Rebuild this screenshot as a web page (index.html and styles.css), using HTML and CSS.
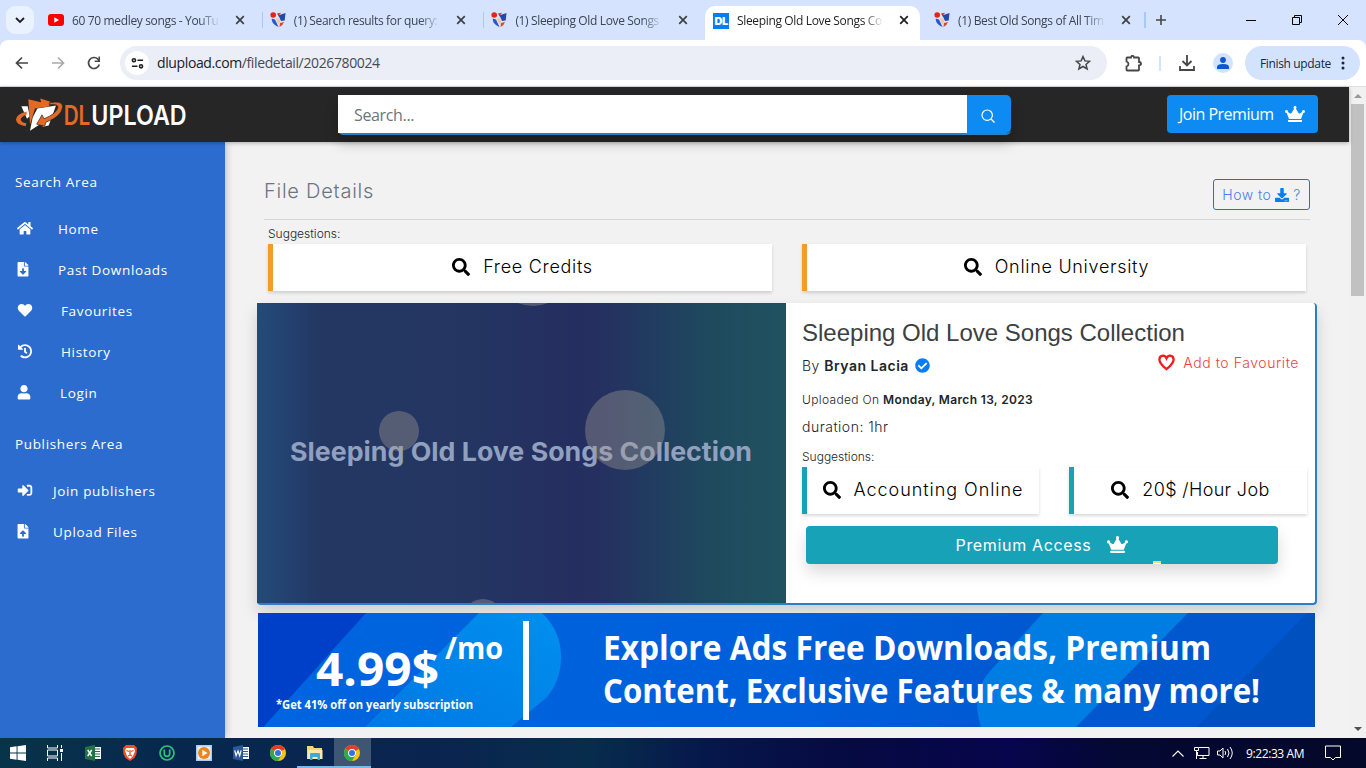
FILE: index.html
```
<!DOCTYPE html>
<html lang="en">
  <head>
    <meta charset="UTF-8" />
    <meta name="viewport" content="width=device-width, initial-scale=1.0" />
    <title>Sleeping Old Love Songs Collection</title>
    <link rel="stylesheet" href="styles.css">
  </head>
  <body>
    <!-- shared icons -->
    <svg class="sprite">
      <symbol id="close" viewBox="0 0 10 10"><path d="M1.2 1.2l7.6 7.6M8.800 1.2L1.2 8.800" fill="none" stroke="currentColor" stroke-width="1.7"/></symbol>
      <symbol id="forum" viewBox="0 0 16 16">
        <path d="M1.500 4L8 4l7.500-3-.8 8q-1 4-5.700 6.500Q3 12.500 2 9z" fill="#e4e2ea"/>
        <path d="M8 3.500L15.500 1l-.8 7.500L11 9 9.500 5.500z" fill="#2149b5"/>
        <path d="M1.700 6.500L5 7.500l3.500 7.500Q3 12.500 2 9z" fill="#2a57c8"/>
        <path d="M10 11l4-1q-1 3.500-4.500 5z" fill="#d4453b"/>
        <path d="M6 7l3-1 1.500 4.500L8 12z" fill="#ecc9a0"/>
        <circle cx="3.200" cy="3" r="2.800" fill="#e3231c"/>
        <path d="M7 1.500l4-.7-2.500 3.200z" fill="#e3231c"/>
      </symbol>
      <symbol id="search" viewBox="0 0 512 512"><path d="M505 442.7L405.3 343c-4.5-4.5-10.6-7-17-7H372c27.6-35.3 44-79.7 44-128C416 93.1 322.9 0 208 0S0 93.1 0 208s93.1 208 208 208c48.3 0 92.7-16.4 128-44v16.3c0 6.4 2.5 12.5 7 17l99.7 99.7c9.4 9.4 24.6 9.4 33.9 0l28.3-28.3c9.4-9.4 9.4-24.6.1-34zM208 336c-70.7 0-128-57.2-128-128 0-70.7 57.2-128 128-128 70.7 0 128 57.2 128 128 0 70.7-57.2 128-128 128z"/></symbol>
      <symbol id="crown" viewBox="0 0 640 512"><path d="M528 448H112c-8.800 0-16 7.200-16 16v32c0 8.800 7.200 16 16 16h416c8.800 0 16-7.200 16-16v-32c0-8.800-7.200-16-16-16zm64-320c-26.500 0-48 21.500-48 48 0 7.100 1.600 13.700 4.400 19.800L476 239.200c-15.400 9.200-35.300 4-44.200-11.600L350.300 85C361 76.200 368 63 368 48c0-26.500-21.500-48-48-48s-48 21.500-48 48c0 15 7 28.200 17.700 37l-81.500 142.600c-8.900 15.600-28.900 20.800-44.200 11.600l-72.300-43.400c2.700-6 4.400-12.700 4.400-19.800 0-26.500-21.500-48-48-48S0 149.500 0 176s21.500 48 48 48c2.600 0 5.200-.4 7.700-.8L128 416h384l72.300-192.800c2.500.4 5.100.8 7.700.8 26.500 0 48-21.500 48-48s-21.500-48-48-48z"/></symbol>
      <symbol id="chrome" viewBox="0 0 16 16">
        <circle cx="8" cy="8" r="8" fill="#fbc116"/>
        <path d="M8 8L1.070 4A8 8 0 0 1 14.930 4z" fill="#e33b2e"/>
        <path d="M8 8L1.070 4A8 8 0 0 0 8 16l3.500-6z" fill="#2da94f"/>
        <circle cx="8" cy="8" r="3.900" fill="#fff"/>
        <circle cx="8" cy="8" r="3" fill="#2f74e0"/>
      </symbol>
    </svg>

    <div class="tabs">
      <div class="tab-list">
        <svg viewBox="0 0 12 12"><path d="M2 4l4 4 4-4" fill="none" stroke="#1f1f1f" stroke-width="1.800"/></svg>
      </div>
      <div class="tab">
        <svg class="fav" viewBox="0 0 16 16"><rect y="2" width="16" height="12" rx="3" fill="#f00"/><path d="M6.300 5.300v5.400L11 8z" fill="#fff"/></svg>
        <span class="tab-title">60 70 medley songs - YouTu</span>
        <svg class="x"><use href="#close"/></svg>
      </div>
      <div class="tab line">
        <svg class="fav"><use href="#forum"/></svg>
        <span class="tab-title">(1) Search results for query: o</span>
        <svg class="x"><use href="#close"/></svg>
      </div>
      <div class="tab line">
        <svg class="fav"><use href="#forum"/></svg>
        <span class="tab-title">(1) Sleeping Old Love Songs</span>
        <svg class="x"><use href="#close"/></svg>
      </div>
      <div class="tab active">
        <span class="fav dl">DL</span>
        <span class="tab-title">Sleeping Old Love Songs Co</span>
        <svg class="x"><use href="#close"/></svg>
      </div>
      <div class="tab">
        <svg class="fav"><use href="#forum"/></svg>
        <span class="tab-title">(1) Best Old Songs of All Tim</span>
        <svg class="x"><use href="#close"/></svg>
      </div>
      <div class="new-tab"><svg viewBox="0 0 10 10"><path d="M5 0v10M0 5h10" stroke="#444746" stroke-width="1.600"/></svg></div>
      <div class="window">
        <svg viewBox="0 0 10 10"><path d="M0 5.500h10" stroke="#000"/></svg>
        <svg viewBox="0 0 10 10"><path d="M.5 2.500h7v7h-7zM2.500 2.500v-2h7v7h-2" fill="none" stroke="#000"/></svg>
        <svg viewBox="0 0 10 10"><path d="M0 0l10 10M10 0L0 10" stroke="#000"/></svg>
      </div>
    </div>

    <div class="toolbar">
      <svg class="nav" viewBox="0 0 14 14"><path d="M13 7H2M7 1.500L1.500 7 7 12.500" fill="none" stroke="#444746" stroke-width="1.700"/></svg>
      <svg class="nav" viewBox="0 0 14 14"><path d="M1 7h11M7 1.500L12.500 7 7 12.500" fill="none" stroke="#a9abad" stroke-width="1.700"/></svg>
      <svg class="nav" viewBox="0 0 14 14"><path d="M12.300 8.500A5.500 5.500 0 1 1 11 3.200L12.500 5" fill="none" stroke="#444746" stroke-width="1.700"/><path d="M13 .5V6H7.700V4.500h3.800v-4z" fill="#444746"/></svg>
      <div class="address">
        <span class="site"><svg viewBox="0 0 14 14"><g fill="none" stroke="#202124" stroke-width="1.700"><circle cx="3.200" cy="3.500" r="1.700"/><path d="M7 3.500h6M1 10h6"/><circle cx="10.800" cy="10" r="1.700"/></g></svg></span>
        <span class="url">dlupload.com<i>/filedetail/2026780024</i></span>
        <svg class="star" viewBox="0 0 16 16"><path d="M8 1.600l1.900 4.300 4.700.4-3.600 3.100 1.100 4.600L8 11.500 3.900 14 5 9.400 1.400 6.300l4.700-.4z" fill="none" stroke="#444746" stroke-width="1.500"/></svg>
      </div>
      <svg class="ext" viewBox="0 0 17 17"><path d="M1.500 3.300q0-.8.8-.8H6q.2-1.700 1.500-1.700T9 2.500h4.200q.8 0 .8.800V7q2 .2 2 1.700t-2 1.700v4.300q0 .8-.8.800H2.300q-.8 0-.8-.8v-3.200q2-.7 2-2.500t-2-2.500z" fill="none" stroke="#444746" stroke-width="1.800"/></svg>
      <span class="bar"></span>
      <svg class="down" viewBox="0 0 16 16"><path d="M8 0v10M3.500 6L8 10.500 12.500 6M1 11v4h14v-4" fill="none" stroke="#444746" stroke-width="1.800"/></svg>
      <span class="profile"><svg viewBox="0 0 12 12"><circle cx="6" cy="3" r="2.900" fill="#0b57d0"/><path d="M0 12v-2q0-3 6-3t6 3v2z" fill="#0b57d0"/></svg></span>
      <div class="update">Finish update
        <svg viewBox="0 0 4 14"><circle cx="2" cy="2" r="1.500"/><circle cx="2" cy="7" r="1.500"/><circle cx="2" cy="12" r="1.500"/></svg>
      </div>
    </div>

    <div class="page">
      <div class="site-body">
        <header>
          <svg class="logo" viewBox="42 36 531 110">
            <path d="M64 66h19l6 30-8 8z" fill="#fff"/>
            <path d="M112 73l56-9-10 28-12 32-18 4 8-18-46 30 8-40z" fill="#fff"/>
            <path d="M80 82q-32 8-32 25 2 16 29 19l2-9q-16-2-17-11 2-9 18-15z" fill="#e36a26"/>
            <path d="M85 45l38 9-2-11 30 10-4 14-42 6-15 48z" fill="#e36a26"/>
            <path d="M148 56q40-8 40 12-4 30-50 46l-4 12-24-6 16-28 6 12q38-16 42-34 0-12-26-8z" fill="#e36a26" stroke="#262626" stroke-width="2"/>
            <text class="logo-dl" x="191" y="122" textLength="80" lengthAdjust="spacingAndGlyphs">DL</text>
            <text class="logo-up" x="274" y="122" textLength="286" lengthAdjust="spacingAndGlyphs">UPLOAD</text>
          </svg>
          <div class="searchbar">
            <input type="text" placeholder="Search..." />
            <button><svg viewBox="0 0 14 14"><circle cx="6.200" cy="6.200" r="5.200" fill="none" stroke="#fff" stroke-width="1.200"/><path d="M10 10l3.500 3.500" stroke="#fff" stroke-width="1.200"/></svg></button>
          </div>
          <a class="join">Join Premium <svg><use href="#crown"/></svg></a>
        </header>
        <div class="columns">
          <aside>
            <h2>Search Area</h2>
            <a><svg viewBox="0 0 576 512"><path d="M280.370 148.260L96 300.110V464a16 16 0 0 0 16 16l112.060-.29a16 16 0 0 0 15.920-16V368a16 16 0 0 1 16-16h64a16 16 0 0 1 16 16v95.640a16 16 0 0 0 16 16.050L464 480a16 16 0 0 0 16-16V300L295.670 148.260a12.190 12.190 0 0 0-15.300 0zM571.600 251.470L488 182.560V44.050a12 12 0 0 0-12-12h-56a12 12 0 0 0-12 12v72.610L318.470 43a48 48 0 0 0-61 0L4.340 251.470a12 12 0 0 0-1.600 16.900l25.500 31A12 12 0 0 0 45.150 301l235.220-193.740a12.190 12.190 0 0 1 15.300 0L530.900 301a12 12 0 0 0 16.900-1.600l25.500-31a12 12 0 0 0-1.700-16.930z"/></svg><span>Home</span></a>
            <a class="file"><svg viewBox="0 0 384 512"><path d="M224 136V0H24C10.700 0 0 10.700 0 24v464c0 13.300 10.700 24 24 24h336c13.300 0 24-10.700 24-24V160H248c-13.200 0-24-10.800-24-24zm76.450 211.360l-96.420 95.700c-6.650 6.610-17.390 6.610-24.040 0l-96.420-95.700C73.420 337.290 80.540 320 94.820 320H160v-80c0-8.840 7.160-16 16-16h32c8.840 0 16 7.160 16 16v80h65.180c14.280 0 21.400 17.290 11.270 27.360zM377 105L279.100 7c-4.500-4.500-10.600-7-17-7H256v128h128v-6.100c0-6.300-2.500-12.400-7-16.900z"/></svg><span>Past Downloads</span></a>
            <a class="in3"><svg viewBox="0 0 512 512"><path d="M462.300 62.600C407.500 15.900 326 24.300 275.700 76.200L256 96.500l-19.700-20.300C186.100 24.300 104.500 15.900 49.700 62.600c-62.800 53.600-66.100 149.800-9.900 207.900l193.500 199.800c12.500 12.900 32.800 12.900 45.300 0l193.500-199.800c56.300-58.100 53-154.300-9.800-207.900z"/></svg><span>Favourites</span></a>
            <a class="in3"><svg viewBox="0 0 512 512"><path d="M504 255.531c.253 136.640-111.180 248.372-247.820 248.468-59.015.042-113.223-20.530-155.822-54.911-11.077-8.940-11.905-25.541-1.839-35.607l11.267-11.267c8.609-8.609 22.353-9.551 31.891-1.984C173.062 425.135 212.781 440 256 440c101.705 0 184-82.311 184-184 0-101.705-82.311-184-184-184-48.814 0-93.149 18.969-126.068 49.932l50.754 50.754c10.080 10.080 2.941 27.314-11.313 27.314H24c-8.837 0-16-7.163-16-16V38.627c0-14.254 17.234-21.393 27.314-11.314l49.372 49.372C129.209 34.136 189.552 8 256 8c136.810 0 247.747 110.780 248 247.531zm-180.912 78.784l9.823-12.630c8.138-10.463 6.253-25.542-4.210-33.679L288 256.349V152c0-13.255-10.745-24-24-24h-16c-13.255 0-24 10.745-24 24v135.651l65.409 50.874c10.463 8.137 25.541 6.253 33.679-4.210z"/></svg><span>History</span></a>
            <a class="user"><svg viewBox="0 0 448 512"><path d="M224 256c70.700 0 128-57.300 128-128S294.700 0 224 0 96 57.300 96 128s57.300 128 128 128zm89.600 32h-16.700c-22.200 10.200-46.900 16-72.900 16s-50.600-5.800-72.900-16h-16.700C60.200 288 0 348.200 0 422.400V464c0 26.500 21.500 48 48 48h352c26.500 0 48-21.500 48-48v-41.600c0-74.200-60.200-134.400-134.400-134.400z"/></svg><span>Login</span></a>
            <h2>Publishers Area</h2>
            <a class="out5"><svg viewBox="0 0 512 512"><path d="M416 448h-84c-6.600 0-12-5.400-12-12v-40c0-6.600 5.400-12 12-12h84c17.700 0 32-14.300 32-32V160c0-17.700-14.300-32-32-32h-84c-6.600 0-12-5.400-12-12V76c0-6.600 5.400-12 12-12h84c53 0 96 43 96 96v192c0 53-43 96-96 96zm-47-201L201 79c-15-15-41-4.500-41 17v96H24c-13.300 0-24 10.700-24 24v96c0 13.300 10.700 24 24 24h136v96c0 21.500 26 32 41 17l168-168c9.300-9.400 9.300-24.600 0-34z"/></svg><span>Join publishers</span></a>
            <a class="file out5"><svg viewBox="0 0 384 512"><path d="M224 136V0H24C10.700 0 0 10.700 0 24v464c0 13.300 10.700 24 24 24h336c13.300 0 24-10.700 24-24V160H248c-13.200 0-24-10.800-24-24zm65.180 216.010H224v80c0 8.840-7.160 16-16 16h-32c-8.840 0-16-7.160-16-16v-80H94.820c-14.280 0-21.410-17.290-11.270-27.360l96.420-95.700c6.650-6.610 17.390-6.610 24.040 0l96.420 95.700c10.150 10.070 3.030 27.360-11.250 27.360zM377 105L279.100 7c-4.500-4.500-10.600-7-17-7H256v128h128v-6.100c0-6.300-2.500-12.400-7-16.900z"/></svg><span>Upload Files</span></a>
          </aside>
          <main>
            <div class="heading">
              <h1>File Details</h1>
              <a class="howto">How to <svg viewBox="0 0 512 512"><path d="M216 0h80c13.300 0 24 10.700 24 24v168h87.700c17.800 0 26.700 21.500 14.100 34.100L269.700 378.300c-7.500 7.500-19.800 7.500-27.300 0L90.100 226.100c-12.600-12.600-3.700-34.100 14.100-34.100H192V24c0-13.300 10.700-24 24-24zm296 376v112c0 13.300-10.700 24-24 24H24c-13.300 0-24-10.700-24-24V376c0-13.300 10.700-24 24-24h146.700l49 49c20.100 20.100 52.500 20.100 72.600 0l49-49H488c13.300 0 24 10.700 24 24zm-124 88c0-11-9-20-20-20s-20 9-20 20 9 20 20 20 20-9 20-20zm64 0c0-11-9-20-20-20s-20 9-20 20 9 20 20 20 20-9 20-20z"/></svg> ?</a>
            </div>
            <div class="suggest top">
              <p>Suggestions:</p>
              <div class="boxes">
                <a><svg><use href="#search"/></svg><span>Free Credits</span></a>
                <a><svg><use href="#search"/></svg><span>Online University</span></a>
              </div>
            </div>
            <div class="card">
              <svg class="thumb" viewBox="0 0 529 300">
                <defs>
                  <linearGradient id="bg">
                    <stop offset="0" stop-color="#234b78"/>
                    <stop offset=".03" stop-color="#234675"/>
                    <stop offset=".12" stop-color="#243762"/>
                    <stop offset=".42" stop-color="#243562"/>
                    <stop offset=".6" stop-color="#252e60"/>
                    <stop offset=".65" stop-color="#253060"/>
                    <stop offset=".73" stop-color="#213a60"/>
                    <stop offset=".85" stop-color="#1f495e"/>
                    <stop offset="1" stop-color="#20525f"/>
                  </linearGradient>
                </defs>
                <rect width="529" height="300" fill="url(#bg)"/>
                <text x="33" y="158" textLength="462" lengthAdjust="spacingAndGlyphs">Sleeping Old Love Songs Collection</text>
                <g fill="#a59f97" fill-opacity=".38">
                  <circle cx="142" cy="128" r="20"/>
                  <circle cx="368" cy="127" r="40"/>
                  <circle cx="276" cy="-37" r="40"/>
                  <circle cx="226" cy="316" r="20"/>
                </g>
              </svg>
              <div class="info">
                <h3>Sleeping Old Love Songs Collection</h3>
                <div class="author">
                  <span class="by">By <b>Bryan Lacia</b></span>
                  <svg class="check" viewBox="0 0 512 512"><path d="M504 256c0 136.967-111.033 248-248 248S8 392.967 8 256 119.033 8 256 8s248 111.033 248 248zM227.314 387.314l184-184c6.248-6.248 6.248-16.379 0-22.627l-22.627-22.627c-6.248-6.249-16.379-6.249-22.628 0L216 308.118l-70.059-70.059c-6.248-6.248-16.379-6.248-22.628 0l-22.627 22.627c-6.248 6.248-6.248 16.379 0 22.627l104 104c6.249 6.249 16.379 6.249 22.628.001z"/></svg>
                  <a class="fave"><svg viewBox="0 0 16 16"><path d="M8 14.300Q1.300 9 1.300 5.200 1.500 1.800 4.600 1.600 6.900 1.700 8 4 9.100 1.700 11.400 1.600q3.100.2 3.300 3.600Q14.700 9 8 14.300z" fill="none" stroke="#f21d1d" stroke-width="2.200"/></svg><span>Add to Favourite</span></a>
                </div>
                <p class="date">Uploaded On <b>Monday, March 13, 2023</b></p>
                <p class="duration">duration: 1hr</p>
                <div class="suggest teal">
                  <p>Suggestions:</p>
                  <div class="boxes">
                    <a class="acc"><svg><use href="#search"/></svg><span>Accounting Online</span></a>
                    <a class="job"><svg><use href="#search"/></svg><span>20$ /Hour Job</span></a>
                  </div>
                </div>
                <a class="premium"><span>Premium Access</span><svg><use href="#crown"/></svg><i class="mark"></i></a>
              </div>
            </div>
            <svg class="banner" viewBox="0 0 1057 114">
              <defs>
                <linearGradient id="b0"><stop offset="0" stop-color="#0065e0"/><stop offset=".5" stop-color="#005fdb"/><stop offset="1" stop-color="#0051c4"/></linearGradient>
                <linearGradient id="b1" x1="0" y1="1" x2="1" y2="0"><stop offset="0" stop-color="#0078e4"/><stop offset="1" stop-color="#0090ee"/></linearGradient>
              </defs>
              <rect width="1057" height="114" fill="url(#b0)"/>
              <path d="M0 0h108L0 120z" fill="#0040c8"/>
              <path d="M221 0h63q19 18 19 44 0 24-15 41l-35 29H107z" fill="url(#b1)"/>
              <path d="M930 0h127v114H818z" fill="#0057ce"/>
              <path d="M930 0H785l-53 58q-20 22-9 56h95z" fill="#007de2"/>
              <path d="M1049 0h8v114H939z" fill="#0050c0"/>
              <path d="M265 8h6v99h-6z" fill="#fff"/>
              <g class="banner-text">
                <text x="58" y="73" font-size="46" textLength="123" lengthAdjust="spacingAndGlyphs">4.99$</text>
                <text x="187" y="46" font-size="31" textLength="58" lengthAdjust="spacingAndGlyphs">/mo</text>
                <text x="18" y="96" font-size="12" textLength="197" lengthAdjust="spacingAndGlyphs">*Get 41% off on yearly subscription</text>
                <text x="345" y="47" font-size="34" textLength="608" lengthAdjust="spacingAndGlyphs">Explore Ads Free Downloads, Premium</text>
                <text x="345" y="90" font-size="34" textLength="657" lengthAdjust="spacingAndGlyphs">Content, Exclusive Features &amp; many more!</text>
              </g>
            </svg>
          </main>
        </div>
      </div>
      <div class="scrollbar"><i class="up"></i><span></span><i class="dn"></i></div>
    </div>

    <div class="taskbar">
      <span><svg viewBox="0 0 16 16"><path d="M0 2.300l6.600-1v6.300H0zM7.500 1.200L16 0v7.600H7.500zM0 8.500h6.600v6.300L0 13.800zM7.500 8.500H16V16l-8.500-1.200z" fill="#fff"/></svg></span>
      <span><svg viewBox="0 0 16 16"><path d="M.5 0v3h10V0M.5 5h10v6H.5zM.5 16v-3h10v3M14.500 0v3M14.500 8v8" fill="none" stroke="#fff"/><path d="M13 4h3v3h-3z" fill="#fff"/></svg></span>
      <span><svg viewBox="0 0 16 16"><path d="M8 2h8v12H8z" fill="#fff"/><path d="M10 4h5M10 6.500h5M10 9h5M10 11.500h5" stroke="#217346" stroke-width="1.200"/><path d="M0 2l10-2v16L0 14z" fill="#217346"/><path d="M2.700 5l4 6M6.700 5l-4 6" stroke="#fff" stroke-width="1.400"/></svg></span>
      <span><svg viewBox="0 0 16 16"><path d="M4 0h8l3 3-.5 6-2 4L8 16l-4.500-3-2-4L1 3z" fill="#f04e23"/><path d="M4 3h8l1 3-2 5-3 3-3-3-2-5z" fill="#fff"/><path d="M4.500 5.500l2.500 1M11.500 5.500l-2.500 1M8 5v5M6 11l2-1 2 1" fill="none" stroke="#f04e23" stroke-width="1.300"/></svg></span>
      <span><svg viewBox="0 0 16 16"><circle cx="8" cy="8" r="7" fill="none" stroke="#2fc17c" stroke-width="1.700"/><path d="M5.300 4.500v4.200q0 2.600 2.700 2.600t2.700-2.600V4.500" fill="none" stroke="#2fc17c" stroke-width="1.700"/></svg></span>
      <span><svg viewBox="0 0 16 16"><path d="M0 0h16v16H0z" fill="#a9cdec"/><path d="M1.500 1.500h13v13h-13z" fill="#e8f1f8"/><circle cx="8" cy="8" r="6" fill="#f08418"/><path d="M6.300 4.700v6.600L11.500 8z" fill="#fff"/></svg></span>
      <span><svg viewBox="0 0 16 16"><path d="M8 2h8v12H8z" fill="#fff"/><path d="M10 4h5M10 6.500h5M10 9h5M10 11.500h5" stroke="#2b579a" stroke-width="1.200"/><path d="M0 2l10-2v16L0 14z" fill="#2b579a"/><path d="M1.700 5.300l1.400 5.400L5 6l1.700 4.700 1.400-5.400" fill="none" stroke="#fff" stroke-width="1.200"/></svg></span>
      <span><svg><use href="#chrome"/></svg></span>
      <span class="open"><svg viewBox="0 0 16 16"><path d="M0 1h6l1 2h8v11H0z" fill="#f7d774"/><path d="M1 5h14.500v9H1z" fill="#fbe9a8"/><path d="M3 15V9q0-1 1-1h8q1 0 1 1v6h-2.500v-3h-5v3z" fill="#3fa9d8"/></svg></span>
      <span class="open current"><svg><use href="#chrome"/></svg></span>
      <div class="tray">
        <svg class="up-arrow" viewBox="0 0 12 7"><path d="M.5 6.500L6 1l5.500 5.500" fill="none" stroke="#fff" stroke-width="1.100"/></svg>
        <svg class="net" viewBox="0 0 16 14"><path d="M5 1.500h10v8H3.500V6M9 9.500v3M5.500 12.500h7M.5 1.500h4v3h-4zM2.500 5v8" fill="none" stroke="#fff"/></svg>
        <svg class="vol" viewBox="0 0 17 14"><path d="M.5 5h2.500l3-3v10L3 9H.5zM8 5q1.500 2 0 4M10.500 3q3 4 0 8M13 1q4.500 6 0 12" fill="none" stroke="#fff"/></svg>
        <span class="clock">9:22:33 AM</span>
        <svg class="note" viewBox="0 0 16 16"><path d="M.5 1h15v11.500h-5L8 15l-2.500-2.500h-5z" fill="none" stroke="#fff"/></svg>
      </div>
    </div>
  </body>
</html>
```
FILE: styles.css
```
* { box-sizing: border-box }
body {
  margin: 0;
  width: 1366px;
  height: 768px;
  overflow: hidden;
  display: flex;
  flex-direction: column;
  font-family: "Open Sans", sans-serif;
  background: #d5e3ff;
}
svg { display: block; flex: none }
.sprite { display: none }
h1, h2, h3, p { margin: 0; font-weight: 300 }

/* browser tabs */
.tabs {
  height: 40px;
  flex: none;
  display: flex;
  background: #d5e3ff;
}
.tab-list {
  width: 28px;
  height: 28px;
  margin: 6px 6px 0;
  border-radius: 9px;
  background: #eaf1ff;
  display: grid;
  place-items: center;
}
.tab-list svg { width: 12px; height: 12px }
.tab {
  width: 221.7px;
  flex: none;
  display: flex;
  align-items: center;
  padding: 0 17px 0 8px;
  font-size: 12px;
  letter-spacing: -0.35px;
  color: #3c4452;
}
.fav { width: 16px; height: 16px; flex: none }
.tab-title {
  flex: 1;
  margin: 1px 12px 0 8px;
  white-space: nowrap;
  overflow: hidden;
  -webkit-mask-image: linear-gradient(90deg, #000 84%, transparent 98%);
  mask-image: linear-gradient(90deg, #000 84%, transparent 98%);
}
.x { width: 10px; height: 10px; color: #3c4043 }
.tab.line { background: linear-gradient(#a8c7fa, #a8c7fa) -1px 12px / 2px 16px no-repeat }
.tab.active {
  margin-top: 6px;
  width: 215px;
  margin-right: 6px;
  padding-right: 11px;
  background: #fff;
  border-radius: 10px 10px 0 0;
  color: #1f1f1f;
}
.tab.active .tab-title, .tab.active .fav { margin-top: -5px }
.tab.active .x { margin-top: -6px; color: #1f1f1f }
.dl {
  background: #087cf5;
  color: #fff;
  font: 900 11px/16px "Inter", sans-serif;
  letter-spacing: -0.5px;
  text-align: center;
}
.new-tab {
  display: flex;
  align-items: center;
  width: 40px;
  margin: 12px 0 12px -4px;
  padding-left: 10px;
  border-left: 2px solid #a8c7fa;
}
.new-tab svg { width: 10px; height: 10px }
.window {
  margin-left: auto;
  display: flex;
  align-items: center;
  gap: 36px;
  padding-right: 18px;
}
.window svg { width: 10px; height: 10px }

/* browser toolbar */
.toolbar {
  height: 47px;
  flex: none;
  display: flex;
  align-items: center;
  background: #fff;
  border-bottom: 1px solid #dcdfe3;
  border-radius: 8px 8px 0 0;
  padding-left: 15px;
}
.nav { width: 14px; height: 14px; margin-right: 22px }
.address {
  width: 987px;
  height: 34px;
  margin-left: -3px;
  border-radius: 17px;
  background: #ebedf7;
  display: flex;
  align-items: center;
  padding: 0 16px 0 5px;
}
.site {
  width: 24px;
  height: 24px;
  border-radius: 50%;
  background: #fff;
  display: grid;
  place-items: center;
}
.site svg { width: 13px; height: 13px }
.url { margin: -1px 0 0 8px; font-size: 14px; letter-spacing: -0.38px; color: #202124 }
.url i { font-style: normal; color: #474a50 }
.star { width: 16px; height: 16px; margin-left: auto }
.ext { width: 17px; height: 17px; margin-left: 18px }
.bar { width: 2px; height: 15px; margin: 0 18px 0 17px; background: #d3e3fd }
.down { width: 16px; height: 16px }
.profile {
  width: 20px;
  height: 20px;
  margin-left: 18px;
  border-radius: 50%;
  background: #d3e3fd;
  display: grid;
  place-items: center;
}
.profile svg { width: 12px; height: 12px }
.update {
  width: 115px;
  height: 34px;
  margin-left: 12px;
  border-radius: 17px;
  background: #d3e3fd;
  display: flex;
  align-items: center;
  padding-left: 15px;
  gap: 10px;
  font-size: 12px;
  letter-spacing: -0.35px;
  color: #14284b;
  white-space: nowrap;
}
.update svg { width: 4px; height: 14px; fill: #14284b }

/* page */
.page { height: 651px; flex: none; display: flex; background: #f2f2f2 }
.site-body { width: 1349px; display: flex; flex-direction: column }
header {
  height: 55px;
  flex: none;
  display: flex;
  align-items: flex-start;
  padding: 8px 31px 0 14px;
  background: #262626;
  box-shadow: 0 1px 4px rgba(0, 0, 0, 0.3);
  position: relative;
  z-index: 2;
}
.logo { width: 177px; height: 37px; margin-top: 1px }
.logo text { font: 600 80px "Inter", sans-serif }
.logo-dl { fill: #e36a26 }
.logo-up { fill: #fff }
.searchbar {
  width: 673px;
  height: 40px;
  margin-left: 147px;
  display: flex;
  border-bottom: 2px solid #2a80c0;
  border-radius: 5px;
  box-shadow: 0 8px 14px rgba(0, 0, 0, 0.2);
}
.searchbar input {
  flex: 1;
  border: 0;
  padding: 2px 16px 0;
  font: 16px "Open Sans", sans-serif;
  letter-spacing: -0.35px;
}
.searchbar input::placeholder { color: #6c757d }
.searchbar button {
  width: 44px;
  border: 0;
  border-radius: 0 5px 5px 0;
  background: #0d8bf2;
  display: grid;
  place-items: center;
  padding: 3px 2px 0 0;
}
.searchbar button svg { width: 14px; height: 14px }
.join {
  width: 151px;
  height: 38px;
  margin-left: auto;
  border-radius: 4px;
  background: #0d8bf2;
  color: #fff;
  font-size: 16px;
  font-weight: 500;
  letter-spacing: -0.5px;
  display: flex;
  align-items: center;
  justify-content: space-between;
  padding: 0 13px 0 12px;
}
.join svg { width: 20px; height: 16px; fill: #fff }
.columns { flex: 1; display: flex; min-height: 0 }

/* sidebar */
aside {
  width: 225px;
  flex: none;
  background: #2d6ccf;
  box-shadow: 0 0 8px rgba(0, 0, 0, 0.3);
  color: #fff;
  font-size: 13.5px;
  letter-spacing: 0.65px;
  padding-top: 15px;
}
aside h2 {
  height: 51px;
  padding-left: 15px;
  font-size: 13.5px;
  font-weight: 400;
  line-height: 51px;
}
aside a { display: flex; align-items: center; height: 41px }
aside h2 ~ h2 { margin-top: 6px }
aside svg { width: 16px; height: 14.5px; margin-left: 17px; fill: #fff }
aside a span { margin-left: 25px }
.file svg { width: 12px; margin-right: 4px }
.user svg { width: 14px; margin-right: 2px }
.in3 span { margin-left: 28px }
.user span { margin-left: 27px }
.out5 span { margin-left: 20px }

/* content */
main {
  flex: 1;
  display: flex;
  flex-direction: column;
  padding: 29px 32px 0;
  font-family: "Inter", sans-serif;
  font-weight: 300;
  color: #212529;
}
.heading {
  margin: 0 7px;
  height: 49px;
  padding-bottom: 8px;
  display: flex;
  justify-content: space-between;
  align-items: center;
  border-bottom: 1px solid #d6d6d6;
}
h1 { font-size: 20px; letter-spacing: 0.75px; color: #6c757d; margin-top: -1px }
.howto {
  width: 97px;
  height: 31px;
  margin-top: 7px;
  border: 1px solid #1279d6;
  border-radius: 3px;
  display: flex;
  align-items: center;
  justify-content: center;
  gap: 4px;
  font-size: 14px;
  letter-spacing: 0.45px;
  color: #4a7fea;
}
.howto svg { width: 14px; height: 14px; fill: #087cf5 }
.suggest p { font-size: 12px; line-height: 15px }
.suggest.top { padding: 7px 11px 0 }
.top p { margin-top: -1px }
.boxes { display: flex; gap: 30px }
.boxes a {
  flex: 1;
  height: 47px;
  display: flex;
  align-items: center;
  justify-content: center;
  gap: 13px;
  padding-bottom: 2px;
  background: #fff;
  border-left: 5px solid #f39c2b;
  box-shadow: 0 2px 3px rgba(0, 0, 0, 0.15);
  color: #000;
  font-size: 18px;
  letter-spacing: 0.7px;
  white-space: nowrap;
}
.boxes svg { width: 18px; height: 18px }
.top .boxes { margin-top: 3px }
.teal .boxes a { border-left-color: #18a2b8 }
.boxes .acc { flex: 0 0 237px; letter-spacing: 0.95px }
.boxes .job { letter-spacing: 0.35px }
.card {
  width: 1060px;
  height: 302px;
  margin-top: 12px;
  display: flex;
  flex: none;
  background: #fff;
  border-right: 2px solid #2a80c8;
  border-bottom: 2px solid #2a80c8;
  border-radius: 4px;
  box-shadow: 0 8px 16px rgba(0, 0, 0, 0.15);
}
.thumb { width: 529px; height: 300px }
.thumb text { font: 700 26px "Inter", sans-serif; fill: #91a0be }
.info { flex: 1; padding: 14px 8px 0 16px }
h3 { font: 24px/32px "Liberation Sans", sans-serif; color: #3c4043; white-space: nowrap }
.author { display: flex; align-items: center; height: 33px; font-size: 14px; letter-spacing: 0.5px }
.by b, .date b { font-weight: 600 }
.check { width: 15px; height: 15px; margin-left: 6px; fill: #087cf5 }
.fave {
  margin: -6px 8px 0 auto;
  display: flex;
  align-items: center;
  gap: 8px;
  letter-spacing: 0.58px;
  color: #f03e3e;
}
.fave svg { width: 17px; height: 17px }
.date { margin-top: 9px; font-size: 12px; line-height: 18px; letter-spacing: 0.34px }
.duration { margin-top: 8px; font-size: 14px; line-height: 20px; letter-spacing: 0.5px }
.teal { margin-top: 12px }
.teal .boxes { margin-top: 3px }
.premium {
  width: 472px;
  height: 38px;
  margin: 12px 0 0 4px;
  padding-bottom: 1px;
  display: flex;
  align-items: center;
  justify-content: center;
  gap: 16px;
  border-radius: 4px;
  background: #18a2b8;
  box-shadow: 0 8px 16px rgba(0, 0, 0, 0.15);
  color: #fff;
  font-size: 16px;
  font-weight: 400;
  letter-spacing: 0.65px;
  position: relative;
}
.premium svg { width: 21px; height: 17px; fill: #fff }
.mark {
  position: absolute;
  left: 347px;
  bottom: 0;
  width: 8px;
  height: 3px;
  background: #d3e58c;
  border-bottom: 1px solid #fff;
}
.banner { width: 1057px; height: 114px; margin: 8px 0 0 1px }
.banner-text { fill: #fff; font-family: "Open Sans", sans-serif; font-weight: 700 }

.scrollbar {
  width: 17px;
  display: flex;
  flex-direction: column;
  align-items: center;
  background: #f1f1f1;
}
.scrollbar span { width: 13px; height: 192px; background: #c1c1c1; margin: 6px 0 auto }
.scrollbar i { border: 4px solid transparent }
.scrollbar .up { border-bottom-color: #9a9a9a; border-top: 0; margin-top: 7px }
.scrollbar .dn { border-top-color: #505050; border-bottom: 0; margin-bottom: 7px }

/* windows taskbar */
.taskbar {
  height: 30px;
  flex: none;
  display: flex;
  background: linear-gradient(95deg, #083448 0%, #07284e 12%, #0a2450 32%, #072d4c 43%, #06174b 52%, #060a42 62%, #07054c 74%, #040833 82%, #040829 100%);
}
.taskbar > span {
  width: 37.1px;
  display: grid;
  place-items: center;
}
.taskbar > span svg { width: 16px; height: 16px }
.taskbar > span:nth-child(-n+2) { padding-right: 2px }
.open { border-bottom: 2px solid #76b9ed; padding-top: 2px }
.current { background: #3c5673 }
.tray {
  margin-left: auto;
  display: flex;
  align-items: center;
  padding-right: 25px;
}
.up-arrow { width: 12px; height: 7px; margin-right: 10px }
.net { width: 16px; height: 14px; margin-right: 7px }
.vol { width: 17px; height: 14px; margin-right: 12px }
.clock { width: 59px; color: #fff; font-size: 12px; letter-spacing: -0.4px; white-space: nowrap; margin-right: 20px }
.note { width: 16px; height: 16px }
```
